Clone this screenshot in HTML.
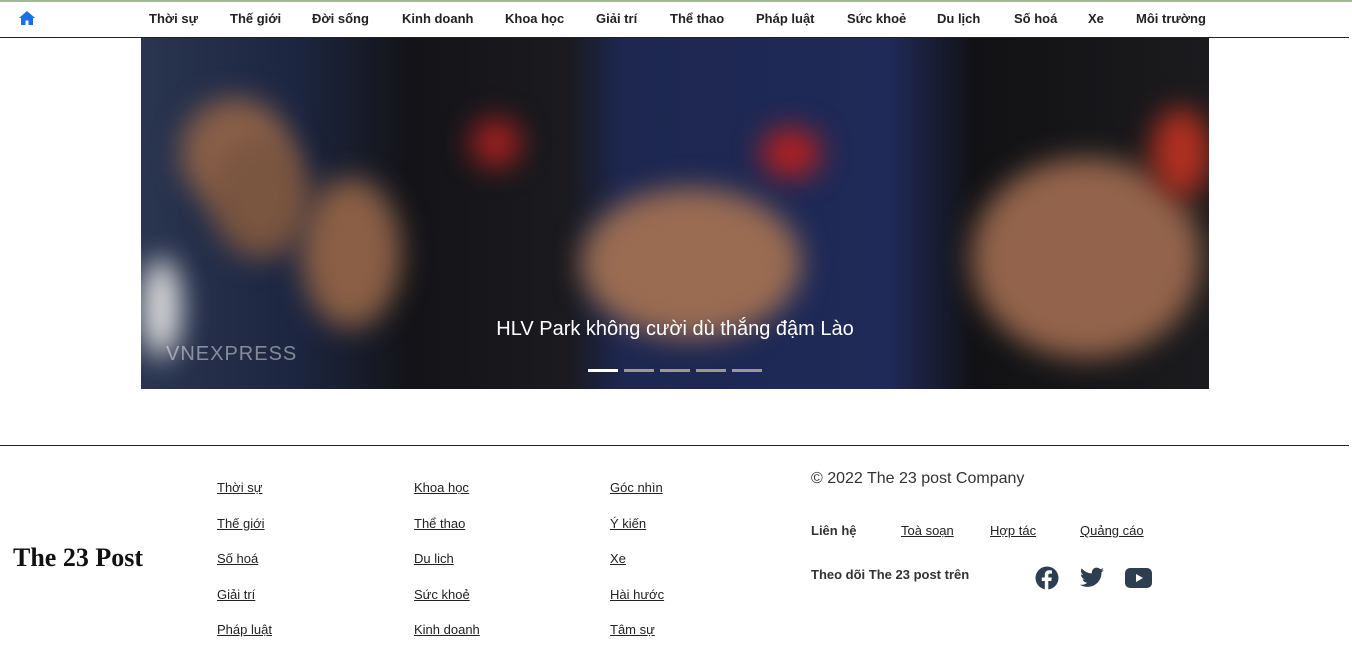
<!DOCTYPE html>
<html><head><meta charset="utf-8"><style>
*{margin:0;padding:0;box-sizing:border-box}
body{width:1352px;height:668px;background:#fff;font-family:"Liberation Sans",Arial,sans-serif;position:relative;overflow:hidden;color:#222}
.top{position:absolute;top:0;left:0;width:1352px;height:2px;background:#9fb89a}
nav{position:absolute;top:2px;left:0;width:1349px;height:36px;border-bottom:1px solid #222}
nav a{position:absolute;top:9px;font-size:13px;font-weight:bold;color:#222;text-decoration:none}
.hero{position:absolute;left:141px;top:38px;width:1068px;height:351px;overflow:hidden;
background:linear-gradient(90deg,#2a3550 0%,#1c2540 15%,#141418 25%,#1a1a1f 40%,#1d2750 45%,#1f2a58 70%,#121215 78%,#1b1b1e 100%)}
.b{position:absolute;border-radius:50%;filter:blur(14px)}
.cap{position:absolute;left:0;width:100%;top:280px;text-align:center;color:#fff;font-size:20px}
.dots{position:absolute;top:321px;left:447px}
.dots i{display:inline-block;width:30px;height:3px;background:#999;margin-right:6px}
.hr{position:absolute;top:445px;left:0;width:1349px;height:1px;background:#222}
.fl{position:absolute;font-size:13px;color:#222;text-decoration:underline}
.logo{position:absolute;left:13px;top:543px;font-family:"Liberation Serif",serif;font-weight:bold;font-size:26px;color:#111}
</style></head><body>
<div class="top"></div>
<nav>
<svg style="position:absolute;left:19px;top:9px" width="16" height="14" viewBox="0 0 16 14"><path d="M8 0L0 7h2v7h4.5V9.5h3V14H14V7h2z" fill="#1a6fe8"/></svg>
<a style="left:149px">Thời sự</a><a style="left:230px">Thế giới</a><a style="left:312px">Đời sống</a><a style="left:402px">Kinh doanh</a><a style="left:505px">Khoa học</a><a style="left:596px">Giải trí</a><a style="left:670px">Thể thao</a><a style="left:756px">Pháp luật</a><a style="left:847px">Sức khoẻ</a><a style="left:937px">Du lịch</a><a style="left:1014px">Số hoá</a><a style="left:1088px">Xe</a><a style="left:1136px">Môi trường</a>
</nav>
<div class="hero">
<div class="b" style="left:40px;top:60px;width:110px;height:110px;background:#8a6048"></div>
<div class="b" style="left:70px;top:100px;width:100px;height:120px;background:#7a5540"></div>
<div class="b" style="left:160px;top:140px;width:100px;height:150px;background:#8a5f45"></div>
<div class="b" style="left:440px;top:150px;width:220px;height:150px;background:#9a6c52"></div>
<div class="b" style="left:830px;top:120px;width:230px;height:200px;background:#93644b"></div>
<div class="b" style="left:0;top:220px;width:40px;height:100px;background:#ddd"></div>
<div class="b" style="left:620px;top:90px;width:60px;height:50px;background:#b02020"></div>
<div class="b" style="left:1010px;top:70px;width:60px;height:90px;background:#b03020"></div>
<div class="b" style="left:330px;top:80px;width:50px;height:50px;background:#a02020"></div>
<div style="position:absolute;left:25px;top:305px;color:rgba(255,255,255,.45);font-size:20px;letter-spacing:1px">VNEXPRESS</div>
<div class="cap">HLV Park không cười dù thắng đậm Lào</div>
<div class="dots"><i style="background:#fff"></i><i></i><i></i><i></i><i></i></div>
</div>
<div class="hr"></div>
<div class="logo">The 23 Post</div>
<a class="fl" style="left:217px;top:480px">Thời sự</a><a class="fl" style="left:217px;top:516px">Thế giới</a><a class="fl" style="left:217px;top:551px">Số hoá</a><a class="fl" style="left:217px;top:587px">Giải trí</a><a class="fl" style="left:217px;top:622px">Pháp luật</a>
<a class="fl" style="left:414px;top:480px">Khoa học</a><a class="fl" style="left:414px;top:516px">Thể thao</a><a class="fl" style="left:414px;top:551px">Du lich</a><a class="fl" style="left:414px;top:587px">Sức khoẻ</a><a class="fl" style="left:414px;top:622px">Kinh doanh</a>
<a class="fl" style="left:610px;top:480px">Góc nhìn</a><a class="fl" style="left:610px;top:516px">Ý kiến</a><a class="fl" style="left:610px;top:551px">Xe</a><a class="fl" style="left:610px;top:587px">Hài hước</a><a class="fl" style="left:610px;top:622px">Tâm sự</a>
<div style="position:absolute;left:811px;top:470px;font-size:16px;color:#333">© 2022 The 23 post Company</div>
<div style="position:absolute;left:811px;top:523px;font-size:13px;font-weight:bold;color:#333">Liên hệ</div>
<a class="fl" style="left:901px;top:523px">Toà soạn</a><a class="fl" style="left:990px;top:523px">Hợp tác</a><a class="fl" style="left:1080px;top:523px">Quảng cáo</a>
<div style="position:absolute;left:811px;top:567px;font-size:13px;font-weight:bold;color:#333">Theo dõi The 23 post trên</div>
<svg style="position:absolute;left:1035px;top:566px" width="24" height="24" viewBox="0 0 24 24"><circle cx="12" cy="12" r="11.5" fill="#2c3e50"/><path d="M13.3 24V15h3l.5-3.5h-3.5V9.3c0-1 .3-1.7 1.8-1.7h1.9V4.5c-.3 0-1.4-.2-2.7-.2-2.7 0-4.5 1.6-4.5 4.6v2.6H6.8V15h3V24z" fill="#fff"/></svg>
<svg style="position:absolute;left:1080px;top:567px" width="24" height="21" viewBox="0 0 24 20"><path d="M24 2.4c-.9.4-1.8.7-2.8.8 1-.6 1.8-1.6 2.2-2.7-1 .6-2 1-3.1 1.2A4.9 4.9 0 0 0 11.9 6 14 14 0 0 1 1.7.9a4.9 4.9 0 0 0 1.5 6.6c-.8 0-1.6-.3-2.2-.6 0 2.4 1.7 4.4 3.9 4.8-.7.2-1.5.2-2.2.1.6 2 2.4 3.4 4.6 3.4A9.9 9.9 0 0 1 0 17.2 14 14 0 0 0 7.5 19.4c9.1 0 14-7.5 14-14v-.6c1-.7 1.8-1.6 2.5-2.4z" fill="#2c3e50"/></svg>
<svg style="position:absolute;left:1125px;top:568px" width="27" height="20" viewBox="0 0 27 20"><rect x="0" y="0" width="27" height="20" rx="5" fill="#2c3e50"/><path d="M11 6v8l7-4z" fill="#fff"/></svg>
</body></html>
